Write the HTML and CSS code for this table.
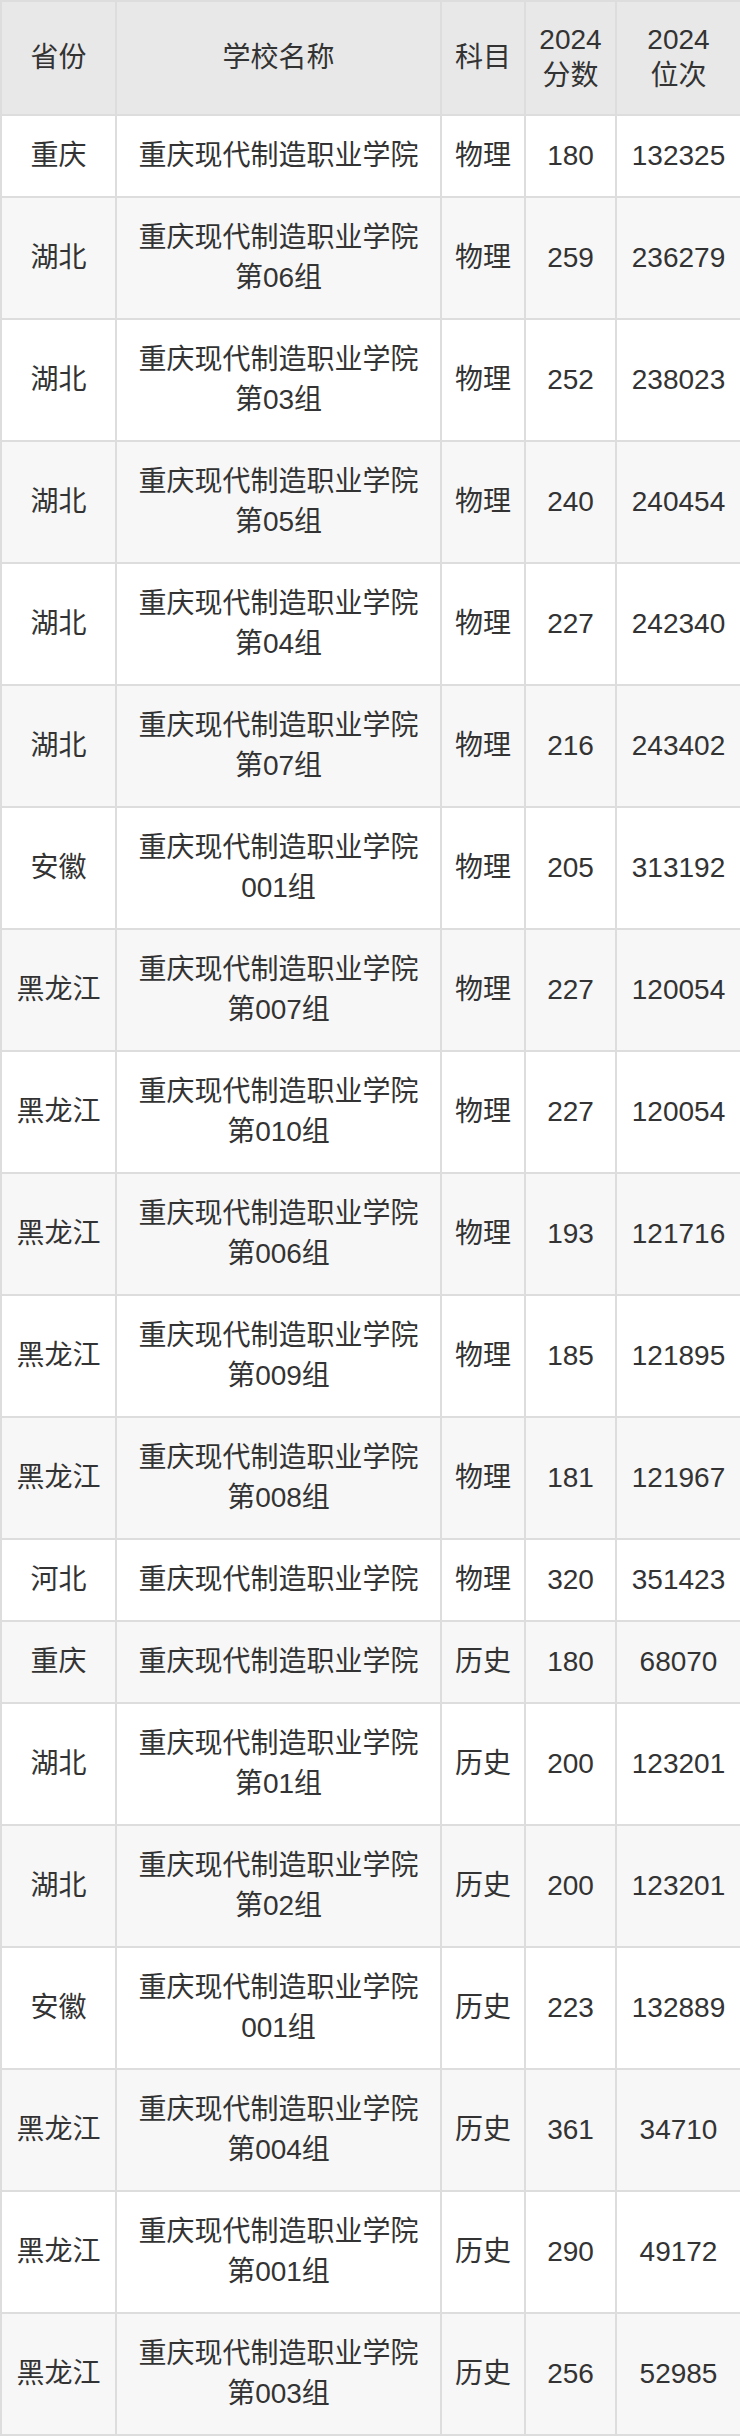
FILE: index.html
```html
<!DOCTYPE html>
<html lang="zh-CN">
<head>
<meta charset="utf-8">
<title>重庆现代制造职业学院</title>
<link rel="stylesheet" href="styles.css">
</head>
<body>
<table class="score-table">
<colgroup>
<col class="c-prov"><col class="c-school"><col class="c-subj"><col class="c-score"><col class="c-rank">
</colgroup>
<thead>
<tr><th>省份</th><th>学校名称</th><th>科目</th><th>2024<br>分数</th><th>2024<br>位次</th></tr>
</thead>
<tbody>
<tr><td>重庆</td><td>重庆现代制造职业学院</td><td>物理</td><td>180</td><td>132325</td></tr>
<tr><td>湖北</td><td>重庆现代制造职业学院<br>第06组</td><td>物理</td><td>259</td><td>236279</td></tr>
<tr><td>湖北</td><td>重庆现代制造职业学院<br>第03组</td><td>物理</td><td>252</td><td>238023</td></tr>
<tr><td>湖北</td><td>重庆现代制造职业学院<br>第05组</td><td>物理</td><td>240</td><td>240454</td></tr>
<tr><td>湖北</td><td>重庆现代制造职业学院<br>第04组</td><td>物理</td><td>227</td><td>242340</td></tr>
<tr><td>湖北</td><td>重庆现代制造职业学院<br>第07组</td><td>物理</td><td>216</td><td>243402</td></tr>
<tr><td>安徽</td><td>重庆现代制造职业学院<br>001组</td><td>物理</td><td>205</td><td>313192</td></tr>
<tr><td>黑龙江</td><td>重庆现代制造职业学院<br>第007组</td><td>物理</td><td>227</td><td>120054</td></tr>
<tr><td>黑龙江</td><td>重庆现代制造职业学院<br>第010组</td><td>物理</td><td>227</td><td>120054</td></tr>
<tr><td>黑龙江</td><td>重庆现代制造职业学院<br>第006组</td><td>物理</td><td>193</td><td>121716</td></tr>
<tr><td>黑龙江</td><td>重庆现代制造职业学院<br>第009组</td><td>物理</td><td>185</td><td>121895</td></tr>
<tr><td>黑龙江</td><td>重庆现代制造职业学院<br>第008组</td><td>物理</td><td>181</td><td>121967</td></tr>
<tr><td>河北</td><td>重庆现代制造职业学院</td><td>物理</td><td>320</td><td>351423</td></tr>
<tr><td>重庆</td><td>重庆现代制造职业学院</td><td>历史</td><td>180</td><td>68070</td></tr>
<tr><td>湖北</td><td>重庆现代制造职业学院<br>第01组</td><td>历史</td><td>200</td><td>123201</td></tr>
<tr><td>湖北</td><td>重庆现代制造职业学院<br>第02组</td><td>历史</td><td>200</td><td>123201</td></tr>
<tr><td>安徽</td><td>重庆现代制造职业学院<br>001组</td><td>历史</td><td>223</td><td>132889</td></tr>
<tr><td>黑龙江</td><td>重庆现代制造职业学院<br>第004组</td><td>历史</td><td>361</td><td>34710</td></tr>
<tr><td>黑龙江</td><td>重庆现代制造职业学院<br>第001组</td><td>历史</td><td>290</td><td>49172</td></tr>
<tr><td>黑龙江</td><td>重庆现代制造职业学院<br>第003组</td><td>历史</td><td>256</td><td>52985</td></tr>
</tbody>
</table>
</body>
</html>
```

FILE: styles.css
```css
html, body {
  margin: 0;
  padding: 0;
  background: #ffffff;
}
.score-table {
  width: 740px;
  table-layout: fixed;
  border-collapse: collapse;
  font-family: "Liberation Sans", "Noto Sans CJK SC", sans-serif;
  font-size: 28px;
  color: #333333;
}
.c-prov { width: 115px; }
.c-school { width: 325px; }
.c-subj { width: 84px; }
.c-score { width: 91px; }
.c-rank { width: 125px; }
.score-table th,
.score-table td {
  border: 2px solid #dddddd;
  text-align: center;
  vertical-align: middle;
  padding: 20px 0;
  line-height: 40px;
  white-space: nowrap;
}
.score-table th {
  background: #e8e8e8;
  font-weight: normal;
  line-height: 36px;
}
.score-table tbody tr:nth-child(even) td {
  background: #f7f7f7;
}
```
